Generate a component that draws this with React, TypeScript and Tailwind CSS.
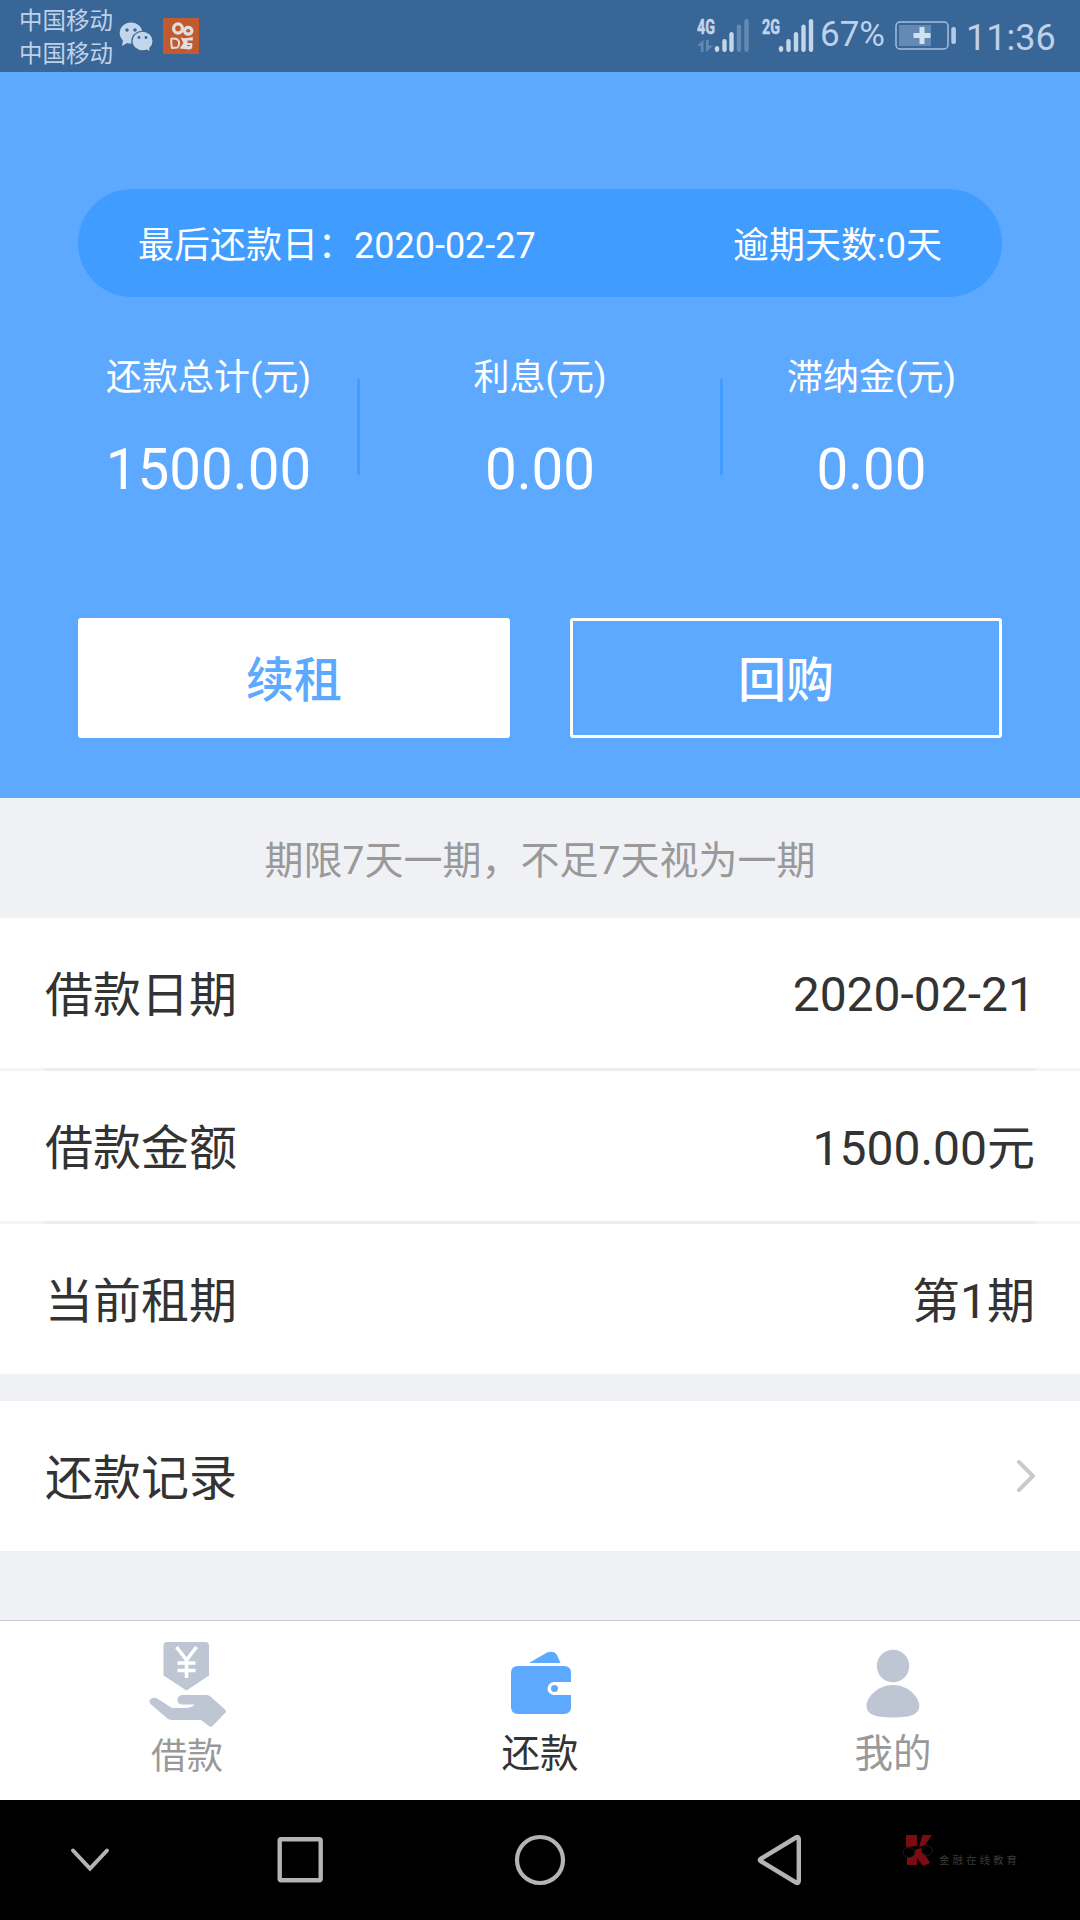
import React from 'react';

const FONT = "font-['Roboto','Noto_Sans_CJK_SC',sans-serif]";

function WeChatIcon() {
  return (
    <svg width="34" height="30" viewBox="0 0 34 30" fill="#c3d5ea">
      <ellipse cx="12" cy="11" rx="11.3" ry="10.5" />
      <path d="M4 18L3 24L10 20Z" />
      <ellipse cx="23.5" cy="19" rx="11.2" ry="10.3" fill="#386697" />
      <ellipse cx="23.5" cy="19" rx="10" ry="9.2" />
      <path d="M25 26L30.5 29L30 24Z" />
      <g fill="#386697">
        <circle cx="8" cy="8" r="1.7" />
        <circle cx="16" cy="8" r="1.7" />
        <circle cx="20" cy="15.5" r="1.4" />
        <circle cx="27" cy="15.5" r="1.4" />
      </g>
    </svg>
  );
}

function VideoAppIcon() {
  return (
    <svg width="36" height="36" viewBox="0 0 36 36">
      <rect width="36" height="36" fill="#c25a30" />
      <g fill="none" stroke="#e3dcdc" strokeWidth="3.2">
        <ellipse cx="15" cy="10.5" rx="4.4" ry="4.6" />
        <ellipse cx="25.2" cy="12.8" rx="3.7" ry="3.4" />
      </g>
      <path
        d="M8.3 20.7Q13.500 20 15.500 22.500Q17.200 26 14.500 29.500L9 30Q8 25 8.300 20.700Z"
        fill="none"
        stroke="#e3dcdc"
        strokeWidth="2"
        strokeLinejoin="round"
      />
      <path d="M17.500 19.500Q23 21 29.800 19V22.500H24.500V25H29.300V29.500Q28.800 32 24 31.200L16.500 30.500L20.500 25Z" fill="#e3dcdc" />
      <path d="M24 27.500H27" fill="none" stroke="#c25a30" strokeWidth="1" />
    </svg>
  );
}

function Signal({ label, weak }: { label: string; weak?: boolean }) {
  const x = weak ? [20, 27.5, 34.5, 42, 49.5] : [19, 26.5, 34, 41.5, 49];
  const top = [31, 24, 17, 9.5, 4];
  return (
    <svg width="54" height="38" viewBox="0 0 54 38">
      <text x="0" y="18" fill="#c3d5ea" stroke="#c3d5ea" strokeWidth="0.5" fontSize="20" fontWeight="700" fontFamily="Roboto, sans-serif" textLength="18" lengthAdjust="spacingAndGlyphs">
        {label}
      </text>
      {weak && <path d="M0 30L6.500 23.500V36H3.800V30ZM9 24H11.700V29.500H16.500L9 36Z" fill="#6389b4" />}
      {x.map((left, i) => (
        <line
          key={left}
          x1={left}
          x2={left}
          y1={top[i] + 1.2}
          y2="33.8"
          stroke={weak && i > 2 ? '#6389b4' : '#c3d5ea'}
          strokeWidth="4.4"
          strokeLinecap="round"
        />
      ))}
    </svg>
  );
}

function BatteryIcon() {
  return (
    <svg width="62" height="30" viewBox="0 0 62 30">
      <rect x="1" y="1" width="52" height="27" rx="4" fill="none" stroke="#a5bfdd" strokeWidth="1.5" />
      <rect x="4" y="4" width="32" height="21" fill="#6389b4" />
      <path d="M27 6V23M18.5 14.5H35.5" stroke="#d3e0f0" strokeWidth="5" />
      <rect x="56.3" y="6" width="4.6" height="17" rx="2" fill="#b5cae4" />
    </svg>
  );
}

function StatusBar() {
  return (
    <div className="flex h-[72px] bg-[#386697] text-[#bfd1e9]">
      <div className="ml-[19px] w-[96px] pt-[5px] text-[23.5px] leading-[33px]">
        <div>中国移动</div>
        <div>中国移动</div>
      </div>
      <div className="ml-1 mt-[22px]">
        <WeChatIcon />
      </div>
      <div className="ml-[10px] mt-[18px]">
        <VideoAppIcon />
      </div>
      <div className="ml-auto flex pr-[26px]">
        <div className="mt-[16px] flex gap-[11px]">
          <Signal label="4G" weak />
          <Signal label="2G" />
        </div>
        <div className="ml-[4px] mt-[14px] w-[75px] text-[35px] leading-[42px]">67%</div>
        <div className="mt-[21px]">
          <BatteryIcon />
        </div>
        <div className="ml-[9px] mt-[17px] w-[88px] text-[36px] leading-[42px]">11:36</div>
      </div>
    </div>
  );
}

function Figure({ label, value, width }: { label: string; value: string; width: string }) {
  return (
    <div className={`flex shrink-0 flex-col items-center ${width}`}>
      <div className="text-[36px] leading-[54px]">{label}</div>
      <div className="mt-[31px] text-[56.5px] leading-[68px]">{value}</div>
    </div>
  );
}

function Summary() {
  return (
    <div className="flex h-[726px] flex-col bg-[#5ca9ff] px-[78px] pt-[117px] text-white">
      <div className="flex h-[108px] items-center justify-between rounded-full bg-[#409dff] px-[60px] pt-[5px] text-[36px]">
        <span>最后还款日：2020-02-27</span>
        <span>逾期天数:0天</span>
      </div>
      <div className="mt-[54px] flex">
        <Figure label="还款总计(元)" value="1500.00" width="-ml-[9px] w-[279px]" />
        <div className="ml-[9px] mt-[28px] h-24 w-[3px] shrink-0 bg-[#409dff]" />
        <Figure label="利息(元)" value="0.00" width="w-[360px]" />
        <div className="mt-[28px] h-24 w-[3px] shrink-0 bg-[#409dff]" />
        <Figure label="滞纳金(元)" value="0.00" width="ml-[9px] -mr-[9px] w-[279px]" />
      </div>
      <div className="mt-auto mb-[60px] grid grid-cols-2 gap-[60px] text-[48px] font-medium">
        <button className="h-[120px] rounded-[3px] bg-white pt-[6px] text-[#5ca9ff]">续租</button>
        <button className="h-[120px] rounded-[3px] border-[3px] border-white pt-[6px]">回购</button>
      </div>
    </div>
  );
}

function Row({ label, children }: { label: string; children: React.ReactNode }) {
  return (
    <div className="flex h-[150px] items-center justify-between bg-white px-[45px] text-[48px] text-[#333333]">
      <span className="pt-[6px]">{label}</span>
      {children}
    </div>
  );
}

function Divider() {
  return (
    <div className="h-[3px] bg-[#f3f5f5] px-[45px]">
      <div className="h-full bg-[#ececee]" />
    </div>
  );
}

function LoanIcon() {
  return (
    <svg width="80" height="90" viewBox="0 0 80 90" fill="#bec6d4">
      <path d="M18 2H40.500Q44 2 44 5.500V35.500L21.500 50.500L-1.500 35.500V5.500Q-1.500 2 2 2Z" transform="translate(16 0)" />
      <path d="M27.500 7L37.500 20L47.500 7M37.500 20V38M28.500 23H46.500M28.500 30.500H46.500" fill="none" stroke="#fff" strokeWidth="3.600" />
      <path d="M1.500 64Q-1 60 2.500 58.500Q6 57 9 59L23 68H37Q44 67 45.500 64.500H33Q28.500 64 28.500 60Q28.500 55.500 33 55H57Q60 55 62 57L76.500 70L77 72L63.500 86Q62 87.500 60 86L52 80H22L19 79Z" />
    </svg>
  );
}

function WalletIcon() {
  return (
    <svg width="60" height="64" viewBox="0 0 60 64" fill="#5ca9ff">
      <path d="M18 12L36 1.500Q43 -1 46 4L49.500 12Z" />
      <path d="M7 15H53Q60 15 60 22V31H43A6.500 6.500 0 0 0 43 44H60V56Q60 63 53 63H7Q0 63 0 56V22Q0 15 7 15Z" />
      <circle cx="43.500" cy="37.500" r="3.500" />
    </svg>
  );
}

function PersonIcon() {
  return (
    <svg width="54" height="70" viewBox="0 0 54 70" fill="#bec6d4">
      <circle cx="27" cy="17" r="16.200" />
      <path d="M27 36C43 36 53.300 49 53.300 56.500C53.300 65 46 68.500 27 68.500C8 68.500 0.500 65 0.500 56.500C0.500 49 11 36 27 36Z" />
    </svg>
  );
}

function TabBar() {
  return (
    <div className="flex h-[180px] justify-between border-t border-[#c8cad2] bg-white px-[110px] text-[#999999]">
      <div className="flex w-[154px] flex-col items-center">
        <div className="ml-[4px] mt-[19px] h-[90px]"><LoanIcon /></div>
        <div className="text-[36px] leading-[54px]">借款</div>
      </div>
      <div className="flex w-[154px] flex-col items-center text-[#333333]">
        <div className="ml-[1px] mt-[30px] h-[64px]"><WalletIcon /></div>
        <div className="mt-[12px] text-[38.500px] leading-[54px]">还款</div>
      </div>
      <div className="flex w-[154px] flex-col items-center">
        <div className="mt-[28px] h-[70px]"><PersonIcon /></div>
        <div className="mt-[8px] text-[38.500px] leading-[54px]">我的</div>
      </div>
    </div>
  );
}

function SystemNav() {
  return (
    <div className="flex h-[120px] items-center bg-black">
      <svg className="ml-[60px]" width="60" height="60" viewBox="0 0 60 60" fill="none" stroke="#b4b4b4" strokeWidth="4" strokeLinecap="round">
        <path d="M13 20.500L30 38.500L47 20.500" />
      </svg>
      <svg className="ml-[150px]" width="60" height="60" viewBox="0 0 60 60" fill="none" stroke="#b4b4b4" strokeWidth="4.400">
        <rect x="9.700" y="9.200" width="41" height="41" rx="1.500" />
      </svg>
      <svg className="ml-[180px]" width="60" height="60" viewBox="0 0 60 60" fill="none" stroke="#b4b4b4" strokeWidth="4.200">
        <circle cx="30" cy="30" r="23" />
      </svg>
      <svg className="ml-[180px]" width="60" height="60" viewBox="0 0 60 60" fill="none" stroke="#b4b4b4" strokeWidth="4.400" strokeLinejoin="round">
        <path d="M10.500 29L46 7.500Q48.800 6 48.800 9.500V50.500Q48.800 54 46 52.500L10.500 31Q9 30 10.500 29Z" />
      </svg>
      <svg className="ml-[92px] mb-[18px]" width="32" height="34" viewBox="0 0 32 34">
        <path d="M4 1H15V12L4 13ZM20.500 1H30L23 11L17 13ZM15 15L19 14L28 29L21 32L15 24V31H5V24Z" fill="#7d0c12" />
        <g fill="#000" stroke="#302020" strokeWidth="0.800">
          <ellipse cx="7" cy="18.500" rx="6" ry="5" />
          <ellipse cx="25" cy="16.500" rx="5.500" ry="4.800" />
        </g>
      </svg>
      <div className="ml-[5px] pt-[2px] text-[10.500px] tracking-[3px] text-[#3a3a3a]">金融在线教育</div>
    </div>
  );
}

export default function App() {
  return (
    <div className={`flex h-[1920px] w-[1080px] flex-col overflow-hidden bg-[#f0f1f5] ${FONT}`}>
      <StatusBar />
      <Summary />
      <div className="flex h-[120px] items-center justify-center pt-[6px] text-[39px] text-[#999999]">
        期限7天一期，不足7天视为一期
      </div>
      <Row label="借款日期"><span className="pt-[4px]">2020-02-21</span></Row>
      <Divider />
      <Row label="借款金额"><span className="pt-[5px]">1500.00元</span></Row>
      <Divider />
      <Row label="当前租期"><span className="pt-[5px]">第1期</span></Row>
      <div className="mt-[27px]">
        <Row label="还款记录">
          <svg width="20" height="34" viewBox="0 0 20 34" fill="none" stroke="#cacaca" strokeWidth="4" strokeLinecap="round">
            <path d="M4 3L18 17L4 31" />
          </svg>
        </Row>
      </div>
      <div className="mt-auto">
        <TabBar />
        <SystemNav />
      </div>
    </div>
  );
}
